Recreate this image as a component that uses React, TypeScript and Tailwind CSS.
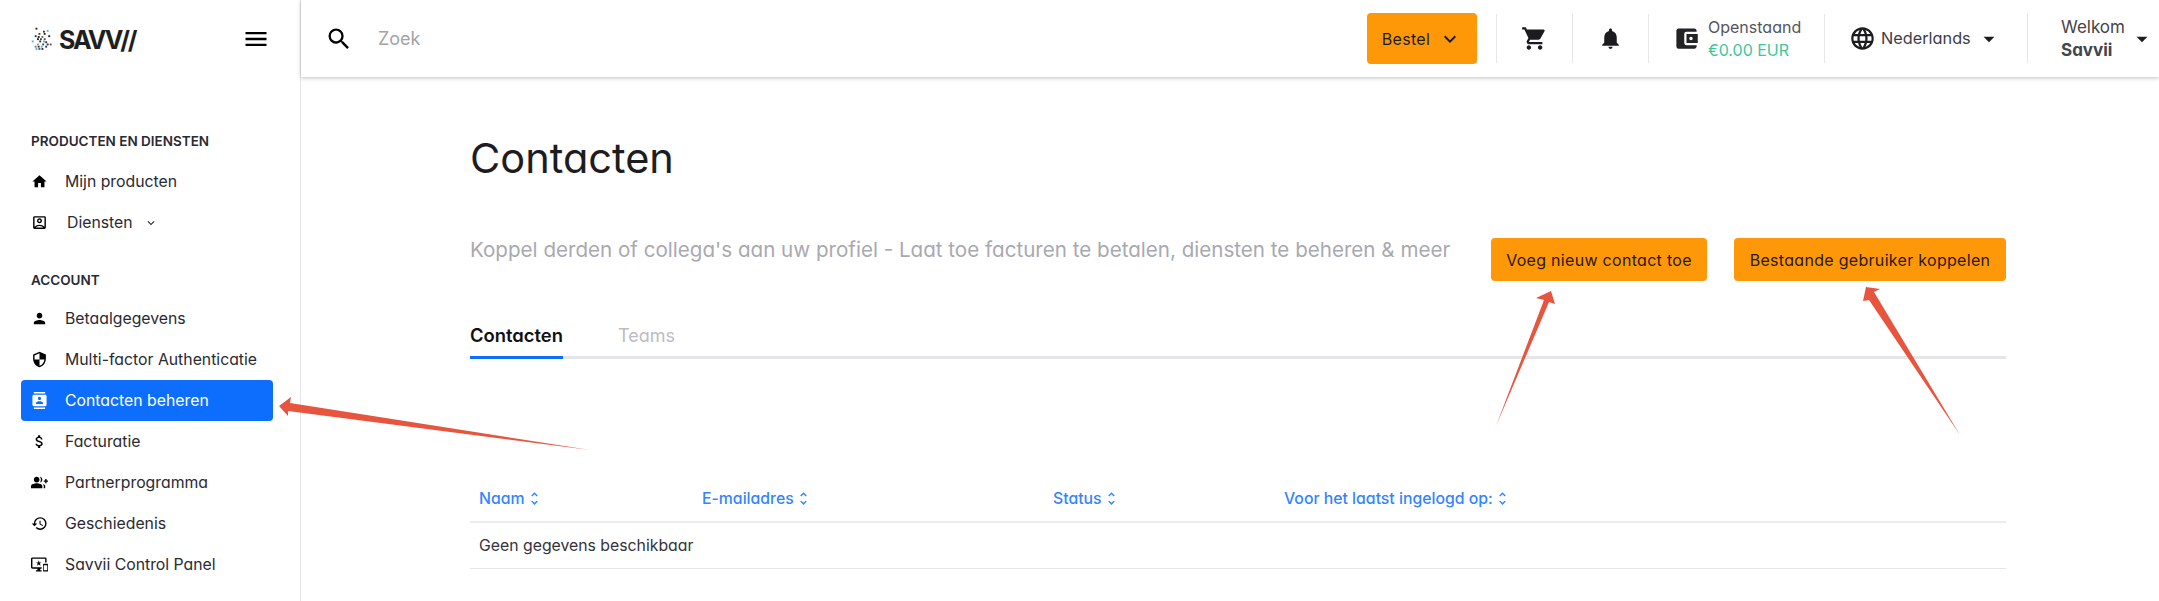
import { ReactNode } from "react";
import {
  MdAccountBalanceWallet,
  MdArrowDropDown,
  MdAttachMoney,
  MdContacts,
  MdGroupAdd,
  MdHome,
  MdImportantDevices,
  MdKeyboardArrowDown,
  MdLanguage,
  MdMenu,
  MdNotifications,
  MdOutlineAccountBox,
  MdPerson,
  MdRestore,
  MdSearch,
  MdSecurity,
  MdShoppingCart,
  MdUnfoldMore,
} from "react-icons/md";

function Logo() {
  const dots = [
    [6, 1, "#222"], [16, 5, "#333"], [21, 4, "#4db5f5"], [10, 8, "#444"], [17, 8, "#333"],
    [5, 11, "#333"], [9, 12, "#222"], [14, 12, "#666"], [23, 11, "#222"], [8, 15, "#222"],
    [12, 15, "#444"], [17, 15, "#555"], [1, 18, "#4db5f5"], [11, 18, "#333"], [16, 18, "#4db5f5"],
    [19, 19, "#333"], [15, 22, "#444"], [21, 22, "#333"], [25, 22, "#555"], [5, 25, "#777"],
    [9, 25, "#333"], [13, 25, "#4db5f5"], [19, 25, "#333"], [6, 28, "#4db5f5"], [10, 28, "#555"],
    [14, 28, "#333"], [8, 22, "#999"],
  ] as const;

  return (
    <div className="flex items-center gap-[7px]">
      <svg width="21" height="24" viewBox="0 0 28 32">
        {dots.map(([x, y, c], i) => (
          <rect key={i} x={x} y={y} width="2.5" height="2.5" fill={c} />
        ))}
      </svg>
      <span className="mt-[3px] text-[25px] font-bold leading-none tracking-[-2px] text-[#1f1f22]">SAVV//</span>
    </div>
  );
}

function NavItem({ icon, label, active, extra, labelClass }: { icon: ReactNode; label: string; active?: boolean; extra?: ReactNode; labelClass?: string }) {
  return (
    <div
      className={
        "flex h-[41px] items-center rounded-[4px] pl-[10px] text-[15.8px] " +
        (active ? "bg-[#0d6efd] text-white" : "text-[#2a2a33]")
      }
    >
      <span className="flex w-[34px] items-center text-[17px]">{icon}</span>
      <span className={labelClass}>{label}</span>
      {extra}
    </div>
  );
}

function SectionLabel({ children }: { children: ReactNode }) {
  return <div className="pl-[10px] text-[13.5px] font-semibold leading-[20px] text-[#2a2a33]">{children}</div>;
}

function Sidebar() {
  return (
    <aside className="flex w-[301px] shrink-0 flex-col border-r border-[#e6e6e8] bg-white">
      <div className="flex h-[77px] items-center justify-between pl-[31px] pr-[30px]">
        <Logo />
        <MdMenu className="text-[28px] text-black" />
      </div>
      <div className="flex flex-col pl-[21px] pr-[27px] pt-[54px]">
        <SectionLabel>PRODUCTEN EN DIENSTEN</SectionLabel>
        <div className="mt-[10px]">
          <NavItem icon={<MdHome className="text-black" />} label="Mijn producten" />
          <NavItem
            icon={<MdOutlineAccountBox className="text-black" />}
            label="Diensten"
            labelClass="ml-[2px]"
            extra={<MdKeyboardArrowDown className="ml-[11px] text-[14px]" />}
          />
        </div>
        <div className="mt-[27px]">
          <SectionLabel>ACCOUNT</SectionLabel>
        </div>
        <div className="mt-[8px]">
          <NavItem icon={<MdPerson className="text-black" />} label="Betaalgegevens" />
          <NavItem icon={<MdSecurity className="text-black" />} label="Multi-factor Authenticatie" />
          <NavItem icon={<MdContacts />} label="Contacten beheren" active />
          <NavItem icon={<MdAttachMoney className="text-black" />} label="Facturatie" />
          <NavItem icon={<MdGroupAdd className="text-black" />} label="Partnerprogramma" />
          <NavItem icon={<MdRestore className="text-black" />} label="Geschiedenis" />
          <NavItem icon={<MdImportantDevices className="text-black" />} label="Savvii Control Panel" />
        </div>
      </div>
    </aside>
  );
}

function Divider() {
  return <div className="h-[49px] w-px bg-[#e6e6e8]" />;
}

function Header() {
  return (
    <header className="flex h-[77px] shrink-0 items-center bg-white pl-[24px] shadow-[0_1px_4px_rgba(0,0,0,0.25)]">
      <MdSearch className="text-[28px] text-black" />
      <span className="ml-[25px] text-[18px] text-[#a3a3a8]">Zoek</span>
      <div className="ml-auto flex items-center">
        <button className="flex h-[51px] w-[110px] items-center justify-center gap-[8px] rounded-[4px] bg-[#ff9808] text-[16px] tracking-[0.3px] text-[#1d1d1d]">
          Bestel
          <MdKeyboardArrowDown className="text-[24px]" />
        </button>
        <div className="ml-[19px]"><Divider /></div>
        <div className="flex w-[75px] justify-center"><MdShoppingCart className="text-[27px] text-[#1c1c1e]" /></div>
        <Divider />
        <div className="flex w-[75px] justify-center"><MdNotifications className="text-[25px] text-[#1c1c1e]" /></div>
        <Divider />
        <div className="flex w-[175px] items-center pl-[24px]">
          <MdAccountBalanceWallet className="text-[27px] text-[#232326]" />
          <div className="ml-[8px] text-[16px] leading-[23px]">
            <div className="text-[#55555c]">Openstaand</div>
            <div className="text-[#3dc79b]">€0.00 EUR</div>
          </div>
        </div>
        <Divider />
        <div className="flex w-[202px] items-center pl-[24px] text-[#3d3d47]">
          <MdLanguage className="text-[27px] text-[#1c1c1e]" />
          <span className="ml-[5px] text-[16.3px]">Nederlands</span>
          <MdArrowDropDown className="ml-[5px] text-[26px] text-[#1c1c1e]" />
        </div>
        <Divider />
        <div className="flex w-[131px] items-center pl-[33px]">
          <div className="text-[17px] leading-[23px] text-[#44444b]">
            <div>Welkom</div>
            <div className="font-bold">Savvii</div>
          </div>
          <MdArrowDropDown className="ml-[4px] text-[26px] text-[#1c1c1e]" />
        </div>
      </div>
    </header>
  );
}

function ColumnHead({ label, className }: { label: string; className: string }) {
  return (
    <div className={"flex items-center text-[15.8px] font-medium text-[#3385ff] " + className}>
      {label}
      <MdUnfoldMore className="ml-[1px] text-[17px]" />
    </div>
  );
}

function Content() {
  return (
    <div className="flex flex-1 flex-col pl-[169px] pr-[153px]">
      <h1 className="mt-[52px] text-[41.5px] leading-[58px] text-[#1d1d1f]">Contacten</h1>
      <div className="mt-[51px] flex items-start">
        <p className="text-[20.6px] leading-[24px] text-[#a9a9b0]">
          Koppel derden of collega's aan uw profiel - Laat toe facturen te betalen, diensten te beheren &amp; meer
        </p>
        <div className="ml-auto flex gap-[27px]">
          <button className="h-[43px] w-[216px] rounded-[4px] bg-[#ff9808] text-[16px] tracking-[0.3px] text-[#2a1a05]">Voeg nieuw contact toe</button>
          <button className="h-[43px] w-[272px] rounded-[4px] bg-[#ff9808] text-[16px] tracking-[0.3px] text-[#2a1a05]">Bestaande gebruiker koppelen</button>
        </div>
      </div>
      <div className="mt-[34px] flex h-[44px] items-stretch border-b-[3px] border-[#e6e6e8]">
        <div className="mb-[-3px] flex h-[44px] w-[93px] items-center border-b-[3px] border-[#0d6efd] text-[18.4px] font-semibold text-[#111]">
          Contacten
        </div>
        <div className="ml-[55px] flex items-center text-[18px] text-[#bcbcc4]">Teams</div>
      </div>
      <div className="mt-[117px]">
        <div className="flex h-[47px] items-center border-b-2 border-[#ececee] pl-[9px]">
          <ColumnHead label="Naam" className="w-[223px]" />
          <ColumnHead label="E-mailadres" className="w-[351px]" />
          <ColumnHead label="Status" className="w-[231px]" />
          <ColumnHead label="Voor het laatst ingelogd op:" className="" />
        </div>
        <div className="flex h-[46px] items-center border-b border-[#e6e6e8] pl-[9px] text-[15.8px] text-[#33333a]">
          Geen gegevens beschikbaar
        </div>
      </div>
    </div>
  );
}

export default function App() {
  return (
    <div className="relative flex h-[601px] w-[2159px] overflow-hidden bg-white font-['Inter',sans-serif] [font-feature-settings:'cv11']">
      <Sidebar />
      <main className="flex min-w-0 flex-1 flex-col">
        <Header />
        <Content />
      </main>
      {/* red annotation arrows on top of the screenshot */}
      <svg className="pointer-events-none absolute left-0 top-0" width="2159" height="601" viewBox="0 0 2159 601">
        <polygon points="279,406 291,397 290,403 590,450 288,411 288,416" fill="#e8553e" />
        <polygon points="1551,291 1555,304 1549,302 1496,426 1544,300 1536,298" fill="#e8553e" />
        <polygon points="1866,287 1880,289 1874,292 1960,435 1869,300 1863,301" fill="#e8553e" />
      </svg>
    </div>
  );
}
